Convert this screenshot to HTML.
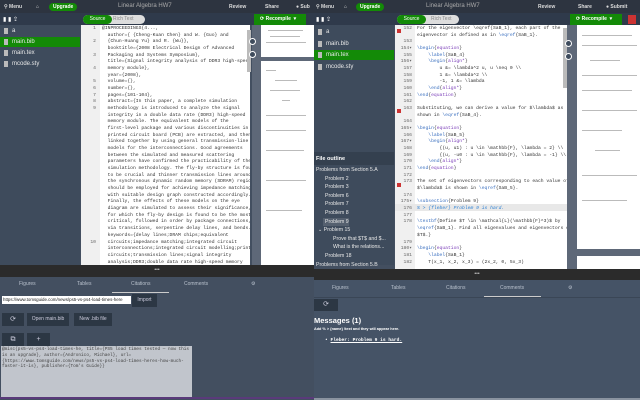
<!DOCTYPE html>
<html><head><meta charset="utf-8"><style>
*{margin:0;padding:0;box-sizing:border-box}
body{width:640px;height:400px;overflow:hidden;background:#434f60;font-family:"Liberation Sans",sans-serif;position:relative}
.a{position:absolute}
.top{background:#2d3440;height:13px;color:#ddd;font-size:5px;font-weight:bold}
.top span{position:absolute;top:4px}
.up{background:#138a07;border-radius:5px;color:#fff;padding:1px 4px;top:2.5px!important}
.title{color:#aaa;font-weight:normal;font-size:6px;top:3px!important}
.tb{background:#2f3a4b;height:12px}
.tree{background:#3e4b5c}
.tree div{position:absolute;left:0;right:0;height:10px;color:#e8e8e8;font-size:6px;padding-left:12px;line-height:10px}
.tree div:before{content:"";position:absolute;left:4px;top:2px;width:4px;height:6px;background:#bbb}
.sel{background:#138a07}
.ed{background:#fff;overflow:hidden}
.gut{background:#f0f0f0;overflow:hidden}
pre{font-family:"Liberation Mono",monospace;font-size:4.7px;line-height:6.67px;color:#333;white-space:pre}
.ln{text-align:right;color:#666}
.pdf{background:#5e6878}
.pg{background:#fff}
.div{background:#2b2b2b}
.tab{color:#b8c0cc;font-size:5px;top:4px}
.btn{background:#2c3744;color:#ccd;font-size:5px;text-align:center}
.k{color:#7a3db8}.b{color:#3a6fbf}
.line{position:absolute;height:1px;background:#bbb}
</style></head><body>

<!-- LEFT APP -->
<div class="a top" style="left:0;top:0;width:314px">
<span style="left:4px">⚲ Menu</span><span style="left:36px">⌂</span><span class="up" style="left:49px">Upgrade</span>
<span class="title" style="left:118px">Linear Algebra HW7</span>
<span style="left:229px">Review</span><span style="left:265px">Share</span><span style="left:296px">● Sub</span></div>
<div class="a tb" style="left:0;top:13px;width:314px"></div>
<div class="a" style="left:83px;top:15px;width:62px;height:9px;border-radius:5px;background:#ddd"></div>
<div class="a" style="left:83px;top:15px;width:29px;height:9px;border-radius:5px;background:#138a07;color:#fff;font-size:5px;text-align:center;line-height:9px">Source</div>
<div class="a" style="left:113px;top:15px;color:#888;font-size:5px;line-height:9px">Rich Text</div>
<div class="a" style="left:254px;top:14px;width:52px;height:11px;background:#138a07;color:#fff;font-size:5px;font-weight:bold;line-height:11px;padding-left:6px">⟳ Recompile &nbsp;▾</div>
<div class="a" style="left:3px;top:16px;color:#fff;font-size:6px">▮ ▮ ⇪</div>
<div class="a tree" style="left:0;top:25px;width:80px;height:240px">
<div style="top:1px">a</div><div class="sel" style="top:12px">main.bib</div><div style="top:23px">main.tex</div><div style="top:34px">mcode.sty</div></div>
<div class="a gut" style="left:81px;top:25px;width:19px;height:240px">
<pre class="ln" style="position:absolute;left:1px;top:1px;width:14px">1

2

3

4

5
6
7
8
9



















10</pre></div>
<div class="a ed" style="left:100px;top:25px;width:150px;height:240px">
<pre style="position:absolute;left:2px;top:1px">@INPROCEEDINGS{4...,
  author={ {Cheng-Kuan Chen} and W. {Guo} and
  {Chun-Huang Yu} and R. {Wu}},
  booktitle={2008 Electrical Design of Advanced
  Packaging and Systems Symposium},
  title={Signal integrity analysis of DDR3 high-speed
  memory module},
  year={2008},
  volume={},
  number={},
  pages={101-104},
  abstract={In this paper, a complete simulation
  methodology is introduced to analyze the signal
  integrity in a double data rate (DDR3) high-speed
  memory module. The equivalent models of the
  first-level package and various discontinuities in
  printed circuit board (PCB) are extracted, and then
  linked together by using general transmission-line
  models for the interconnections. Good agreements
  between the simulated and measured scattering
  parameters have confirmed the practicability of the
  simulation methodology. The fly-by structure is found
  to be crucial and thinner transmission lines around
  the synchronous dynamic random memory (SDRAM) region
  should be employed for achieving impedance matching
  with suitable design graph constructed accordingly.
  Finally, the effects of these models on the eye
  diagram are simulated to assess their significance,
  for which the fly-by design is found to be the most
  critical, followed in order by package connections,
  via transitions, serpentine delay lines, and bends.},
  keywords={delay lines;DRAM chips;equivalent
  circuits;impedance matching;integrated circuit
  interconnections;integrated circuit modelling;printed
  circuits;transmission lines;signal integrity
  analysis;DDR3;double data rate high-speed memory</pre></div>
<div class="a" style="left:247px;top:30px;width:4px;height:42px;background:#bbb"></div>
<div class="a pdf" style="left:252px;top:25px;width:62px;height:240px"></div>
<div class="a pg" style="left:261px;top:25px;width:53px;height:32px"></div>
<div class="a pg" style="left:261px;top:61px;width:53px;height:204px"></div>
<div class="line" style="left:268px;top:30px;width:35px"></div><div class="line" style="left:270px;top:36px;width:30px"></div><div class="line" style="left:266px;top:42px;width:40px"></div>
<div class="line" style="left:266px;top:70px;width:10px"></div><div class="line" style="left:275px;top:80px;width:22px"></div><div class="line" style="left:270px;top:90px;width:30px"></div><div class="line" style="left:282px;top:100px;width:8px"></div><div class="line" style="left:266px;top:115px;width:40px"></div><div class="line" style="left:266px;top:130px;width:40px"></div><div class="line" style="left:266px;top:150px;width:38px"></div><div class="line" style="left:266px;top:180px;width:40px"></div><div class="line" style="left:266px;top:210px;width:36px"></div>
<div class="a" style="left:249px;top:38px;width:7px;height:7px;border-radius:50%;background:#3e4b5c;border:1px solid #fff"></div>
<div class="a" style="left:249px;top:51px;width:7px;height:7px;border-radius:50%;background:#3e4b5c;border:1px solid #fff"></div>
<div class="a div" style="left:0;top:265px;width:314px;height:12px;color:#ccc;font-size:5px;text-align:center;line-height:11px">•••</div>
<div class="a" style="left:0;top:277px;width:314px;height:123px;background:#434f60"></div>
<span class="a tab" style="left:19px;top:281px">Figures</span><span class="a tab" style="left:77px;top:281px">Tables</span><span class="a tab" style="left:131px;top:281px">Citations</span><span class="a tab" style="left:184px;top:281px">Comments</span><span class="a tab" style="left:251px;top:281px">⚙</span>
<div class="a" style="left:112px;top:292px;width:57px;height:1px;background:#ccc"></div>
<div class="a" style="left:2px;top:296px;width:129px;height:8px;background:#fff;color:#222;font-size:4.4px;line-height:8px;padding-left:1px;overflow:hidden;white-space:nowrap">https://www.tomsguide.com/news/ps5-vs-ps4-load-times-here</div>
<div class="a btn" style="left:132px;top:294px;width:25px;height:13px;line-height:13px">Import</div>
<div class="a btn" style="left:2px;top:313px;width:22px;height:13px;line-height:13px;font-size:7px">⟳</div>
<div class="a btn" style="left:27px;top:313px;width:42px;height:13px;line-height:13px">Open main.bib</div>
<div class="a btn" style="left:74px;top:313px;width:38px;height:13px;line-height:13px">New .bib file</div>
<div class="a btn" style="left:2px;top:333px;width:22px;height:13px;line-height:13px;font-size:7px">⧉</div>
<div class="a btn" style="left:27px;top:333px;width:23px;height:13px;line-height:13px;font-size:7px">+</div>
<pre class="a" style="left:1px;top:346px;width:191px;height:51px;background:#c1c5cc;font-size:4.4px;line-height:5.8px;padding:1px;color:#444">@misc{ps5-vs-ps4-load-times-he, title={PS5 load times tested — now this
is an upgrade}, author={Andronico, Michael}, url=
{https://www.tomsguide.com/news/ps5-vs-ps4-load-times-heres-how-much-
faster-it-is}, publisher={Tom's Guide}}</pre>
<div class="a" style="left:0;top:397px;width:314px;height:2px;background:#5a3a7a"></div>

<!-- RIGHT APP -->
<div class="a top" style="left:314px;top:0;width:326px">
<span style="left:2px">⚲ Menu</span><span style="left:30px">⌂</span><span class="up" style="left:42px">Upgrade</span>
<span class="title" style="left:112px">Linear Algebra HW7</span>
<span style="left:224px">Review</span><span style="left:264px">Share</span><span style="left:292px">● Submit</span></div>
<div class="a tb" style="left:314px;top:13px;width:326px"></div>
<div class="a" style="left:397px;top:15px;width:62px;height:9px;border-radius:5px;background:#ddd"></div>
<div class="a" style="left:397px;top:15px;width:29px;height:9px;border-radius:5px;background:#138a07;color:#fff;font-size:5px;text-align:center;line-height:9px">Source</div>
<div class="a" style="left:431px;top:15px;color:#888;font-size:5px;line-height:9px">Rich Text</div>
<div class="a" style="left:570px;top:14px;width:52px;height:11px;background:#138a07;color:#fff;font-size:5px;font-weight:bold;line-height:11px;padding-left:6px">⟳ Recompile &nbsp;▾</div>
<div class="a" style="left:628px;top:15px;width:8px;height:9px;background:#c33"></div>
<div class="a" style="left:316px;top:16px;color:#fff;font-size:6px">▮ ▮ ⇪</div>
<div class="a tree" style="left:314px;top:25px;width:80px;height:127px">
<div style="top:2px">a</div><div style="top:14px">main.bib</div><div class="sel" style="top:25px">main.tex</div><div style="top:37px">mcode.sty</div></div>
<div class="a" style="left:314px;top:152px;width:80px;height:113px;background:#3e4b5c"></div>
<div class="a" style="left:314px;top:152px;width:80px;height:13px;background:#34404f;color:#fff;font-size:5.5px;font-weight:bold;line-height:14px;padding-left:2px">File outline</div>
<div class="a" style="left:314px;top:166px;width:80px;color:#e8e8e8;font-size:5.2px;line-height:8.6px">
<div style="padding-left:2px">Problems from Section 5.A</div>
<div style="padding-left:11px">Problem 2</div><div style="padding-left:11px">Problem 3</div><div style="padding-left:11px">Problem 6</div><div style="padding-left:11px">Problem 7</div><div style="padding-left:11px">Problem 8</div>
<div style="margin-left:9px;padding-left:2px;background:#55606f;width:26px">Problem 9</div>
<div style="padding-left:4px">⌄ Problem 15</div>
<div style="padding-left:19px">Prove that $T$ and $...</div><div style="padding-left:19px">What is the relations...</div>
<div style="padding-left:11px">Problem 18</div><div style="padding-left:2px">Problems from Section 5.B</div></div>
<div class="a gut" style="left:395px;top:25px;width:20px;height:244px"></div>
<div class="a" style="left:395px;top:204px;width:172px;height:7px;background:#e8e8e8"></div>
<pre class="a ln" style="left:397px;top:26px;width:15px">152

153
154▾
155
156▾
157
158
159
160
161
162
163

164
165▾
166
167▾
168
169
170
171
172
173

174
175▾
176
177
178


179
180▾
181
182</pre>
<div class="a" style="left:397px;top:29px;width:4px;height:4px;background:#c33"></div>
<div class="a" style="left:397px;top:109px;width:4px;height:4px;background:#c33"></div>
<div class="a" style="left:397px;top:183px;width:4px;height:4px;background:#c33"></div>
<div class="a ed" style="left:415px;top:25px;width:152px;height:244px;background:transparent">
<div class="a" style="left:0;top:0;width:152px;height:179px;background:#fff"></div>
<div class="a" style="left:0;top:186px;width:152px;height:58px;background:#fff"></div>
<pre style="position:absolute;left:2px;top:1px">For the eigenvector \eqref{SaB_1}, each part of the
eigenvector is defined as in <span class="b">\eqref</span>{SaB_1}.

<span class="b">\begin</span>{<span class="k">equation</span>}
    <span class="b">\label</span>{SaB_4}
    <span class="b">\begin</span>{<span class="k">align*</span>}
        u &amp;= \lambda^2 u, u \neq 0 \\
        1 &amp;= \lambda^2 \\
        -1, 1 &amp;= \lambda
    <span class="b">\end</span>{<span class="k">align*</span>}
<span class="b">\end</span>{<span class="k">equation</span>}

Substituting, we can derive a value for $\lambda$ as
shown in <span class="b">\eqref</span>{SaB_4}.

<span class="b">\begin</span>{<span class="k">equation</span>}
    <span class="b">\label</span>{SaB_5}
    <span class="b">\begin</span>{<span class="k">align*</span>}
        {(u, u1) : u \in \mathbb{F}, \lambda = 2} \\
        {(u, -u0 : u \in \mathbb{F}, \lambda = -1} \\
    <span class="b">\end</span>{<span class="k">align*</span>}
<span class="b">\end</span>{<span class="k">equation</span>}

The set of eigenvectors corresponding to each value of
$\lambda$ is shown in <span class="b">\eqref</span>{SaB_5}.

<span class="b">\subsection</span>{Problem 9}
<span style="color:#2a7fd4;font-style:italic">% &gt; {fleber} Problem 9 is hard.</span>

<span class="b">\textbf</span>{Define $T \in \mathcal{L}(\mathbb{F}^3)$ by
<span class="b">\eqref</span>{SaB_1}. Find all eigenvalues and eigenvectors of
$T$.}

<span class="b">\begin</span>{<span class="k">equation</span>}
    <span class="b">\label</span>{SaB_1}
    T(x_1, x_2, x_3) = (2x_2, 0, 5x_3)</pre></div>
<div class="a" style="left:563px;top:28px;width:4px;height:60px;background:#bbb"></div>
<div class="a pdf" style="left:567px;top:25px;width:73px;height:245px"></div>
<div class="a pg" style="left:577px;top:25px;width:63px;height:224px"></div>
<div class="a pg" style="left:577px;top:256px;width:63px;height:14px"></div>
<div class="line" style="left:582px;top:35px;width:50px"></div><div class="line" style="left:582px;top:45px;width:55px"></div><div class="line" style="left:590px;top:60px;width:30px"></div><div class="line" style="left:582px;top:75px;width:55px"></div><div class="line" style="left:582px;top:90px;width:50px"></div><div class="line" style="left:582px;top:110px;width:55px"></div><div class="line" style="left:582px;top:130px;width:40px"></div><div class="line" style="left:595px;top:150px;width:25px"></div><div class="line" style="left:582px;top:175px;width:55px"></div><div class="line" style="left:582px;top:200px;width:45px"></div>
<div class="a" style="left:565px;top:40px;width:7px;height:7px;border-radius:50%;background:#3e4b5c;border:1px solid #fff"></div>
<div class="a" style="left:565px;top:53px;width:7px;height:7px;border-radius:50%;background:#3e4b5c;border:1px solid #fff"></div>
<div class="a div" style="left:314px;top:269px;width:326px;height:11px;color:#ccc;font-size:5px;text-align:center;line-height:11px">•••</div>
<div class="a" style="left:314px;top:280px;width:326px;height:120px;background:#455366"></div>
<span class="a tab" style="left:332px;top:285px">Figures</span><span class="a tab" style="left:391px;top:285px">Tables</span><span class="a tab" style="left:446px;top:285px">Citations</span><span class="a tab" style="left:500px;top:285px">Comments</span><span class="a tab" style="left:568px;top:285px">⚙</span>
<div class="a" style="left:484px;top:296px;width:57px;height:1px;background:#ccc"></div>
<div class="a" style="left:314px;top:297px;height:1px;background:#3a4656;width:326px"></div>
<div class="a btn" style="left:314px;top:299px;width:24px;height:12px;line-height:12px;font-size:7px">⟳</div>
<div class="a" style="left:314px;top:316px;color:#fff;font-size:7.5px;font-weight:bold">Messages (1)</div>
<div class="a" style="left:314px;top:327px;color:#fff;font-size:3.8px;font-weight:bold">Add % &gt; {name} \text and they will appear here.</div>
<div class="a" style="left:325px;top:338px;color:#fff;font-size:4.6px;font-family:'Liberation Mono',monospace;font-weight:bold">• <u>Fleber: Problem 9 is hard.</u></div>
<div class="a" style="left:314px;top:398px;width:326px;height:2px;background:#8a93a0"></div>
</body></html>
